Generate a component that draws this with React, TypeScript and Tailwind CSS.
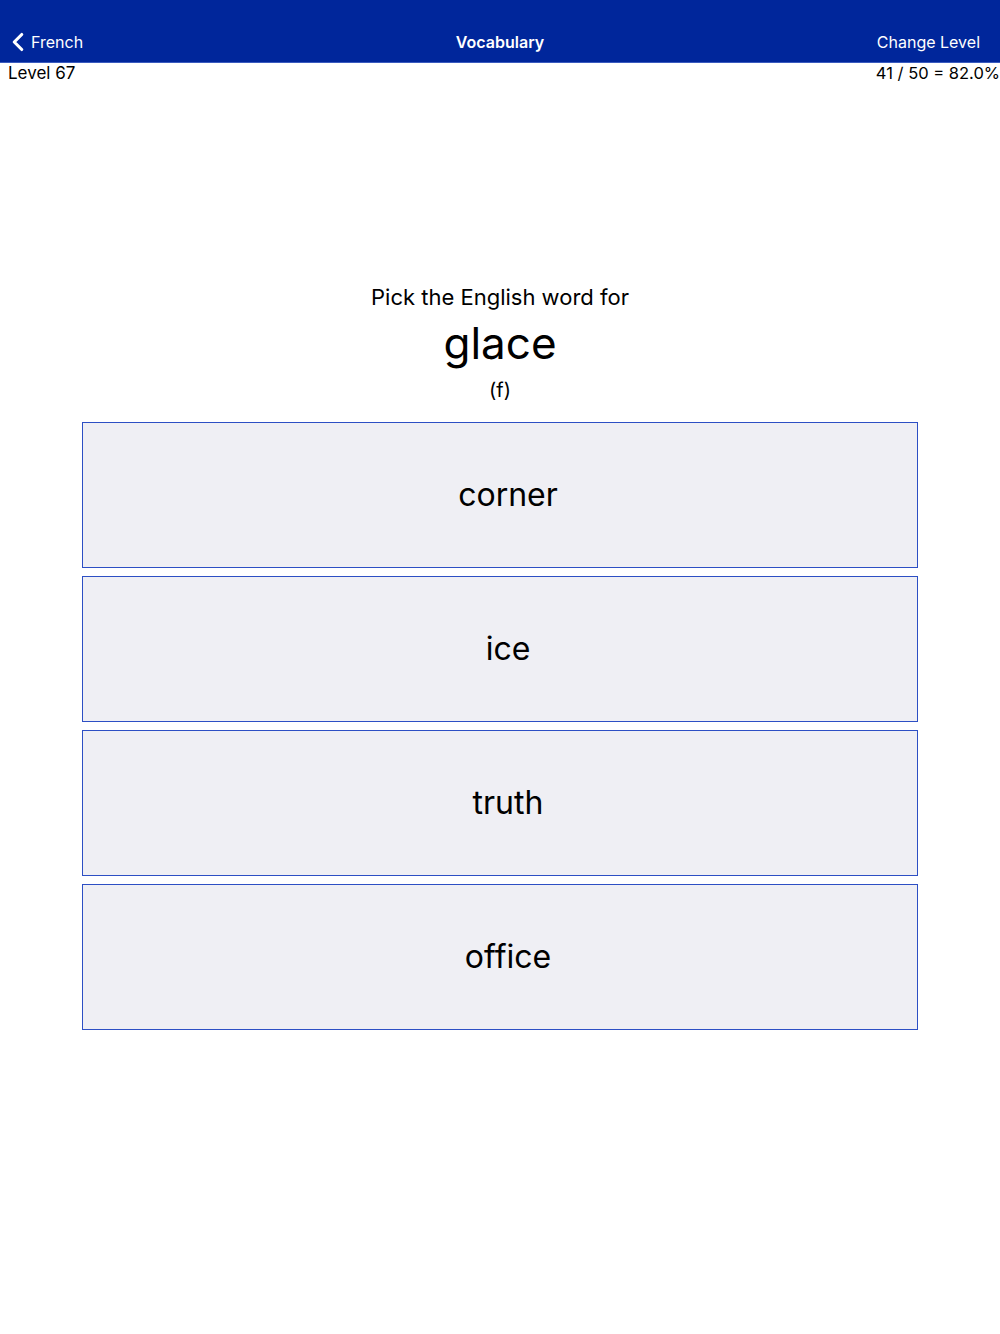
import { ChevronLeft } from 'lucide-react';

const choices = ['corner', 'ice', 'truth', 'office'];

export default function App() {
  return (
    <div className="min-h-[1334px] bg-white text-black" style={{ fontFamily: 'Inter, "Noto Sans", sans-serif' }}>
      {/* Nav bar */}
      <div className="h-[63px] bg-[#00269b] border-b border-[#3a5bbf] grid grid-cols-3 items-end pb-[8px] px-[12px] text-white text-[16px]">
        <div className="flex items-center">
          <ChevronLeft className="w-[30px] h-[30px] -ml-[9px] -my-[4px]" strokeWidth={2.5} />
          <span className="-ml-[2px]">French</span>
        </div>
        <div className="text-center font-semibold">Vocabulary</div>
        <div className="text-right pr-[8px]">Change Level</div>
      </div>

      {/* Status row */}
      <div className="flex justify-between pl-[8px] text-[17px] leading-[21px]">
        <span>Level 67</span>
        <span className="text-[16.5px]">41 / 50 = 82.0%</span>
      </div>

      {/* Question */}
      <div className="pt-[200px] flex flex-col items-center">
        <p className="text-[22px] leading-[26px]">Pick the English word for</p>
        <p className="text-[44px] leading-[56px] mt-[5px]">glace</p>
        <p className="text-[20px] leading-[24px] mt-[7px]">(f)</p>
      </div>

      {/* Choices */}
      <div className="mt-[20px] px-[82px] flex flex-col gap-[8px]">
        {choices.map((c) => (
          <button
            key={c}
            className="h-[146px] w-full bg-[#efeff4] border border-[#2d4fc4] flex items-center justify-center pl-[16px] text-[32px]"
          >
            {c}
          </button>
        ))}
      </div>
    </div>
  );
}
